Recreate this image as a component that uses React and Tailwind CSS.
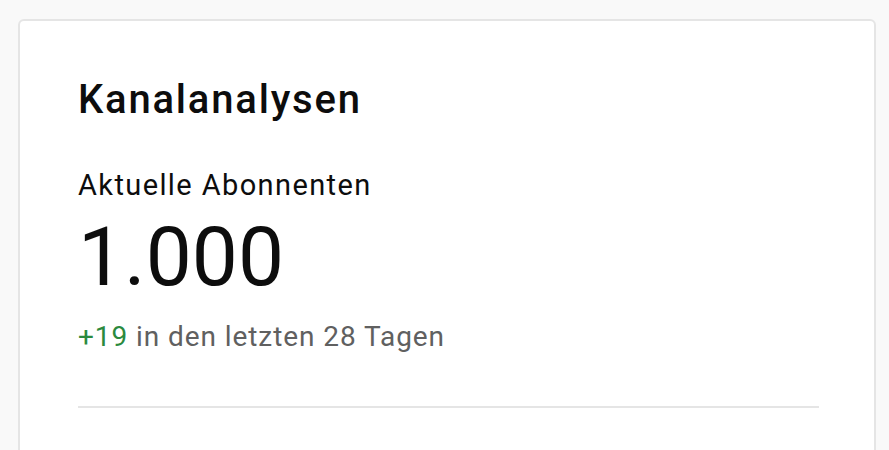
export default function App() {
  return (
    <div className="h-screen bg-[#f9f9f9] pt-[19px] pl-[18px] overflow-hidden" style={{ fontFamily: "Roboto, 'Liberation Sans', sans-serif" }}>
      {/* Kanalanalysen card, runs past the bottom edge */}
      <div className="w-[858px] h-[470px] bg-white border-2 border-[#e5e5e5] rounded-md pt-[55px] pl-[58px] pr-[55px]">
        <h2 className="text-[40px] leading-[48px] font-medium tracking-[0.045em] text-[#0d0d0d]">Kanalanalysen</h2>
        <p className="mt-[43px] text-[29px] leading-[36px] tracking-[0.048em] text-[#0d0d0d]">Aktuelle Abonnenten</p>
        <p className="mt-[6px] text-[82px] leading-[96px] text-[#0d0d0d]">1.000</p>
        <p className="mt-[14px] text-[28px] leading-[36px] tracking-[0.033em] text-[#606060]">
          <span className="text-[#2b8a3e]">+19</span> in den letzten 28 Tagen
        </p>
        <div className="mt-[51px] h-[2px] bg-[#e5e5e5]" />
      </div>
    </div>
  )
}
